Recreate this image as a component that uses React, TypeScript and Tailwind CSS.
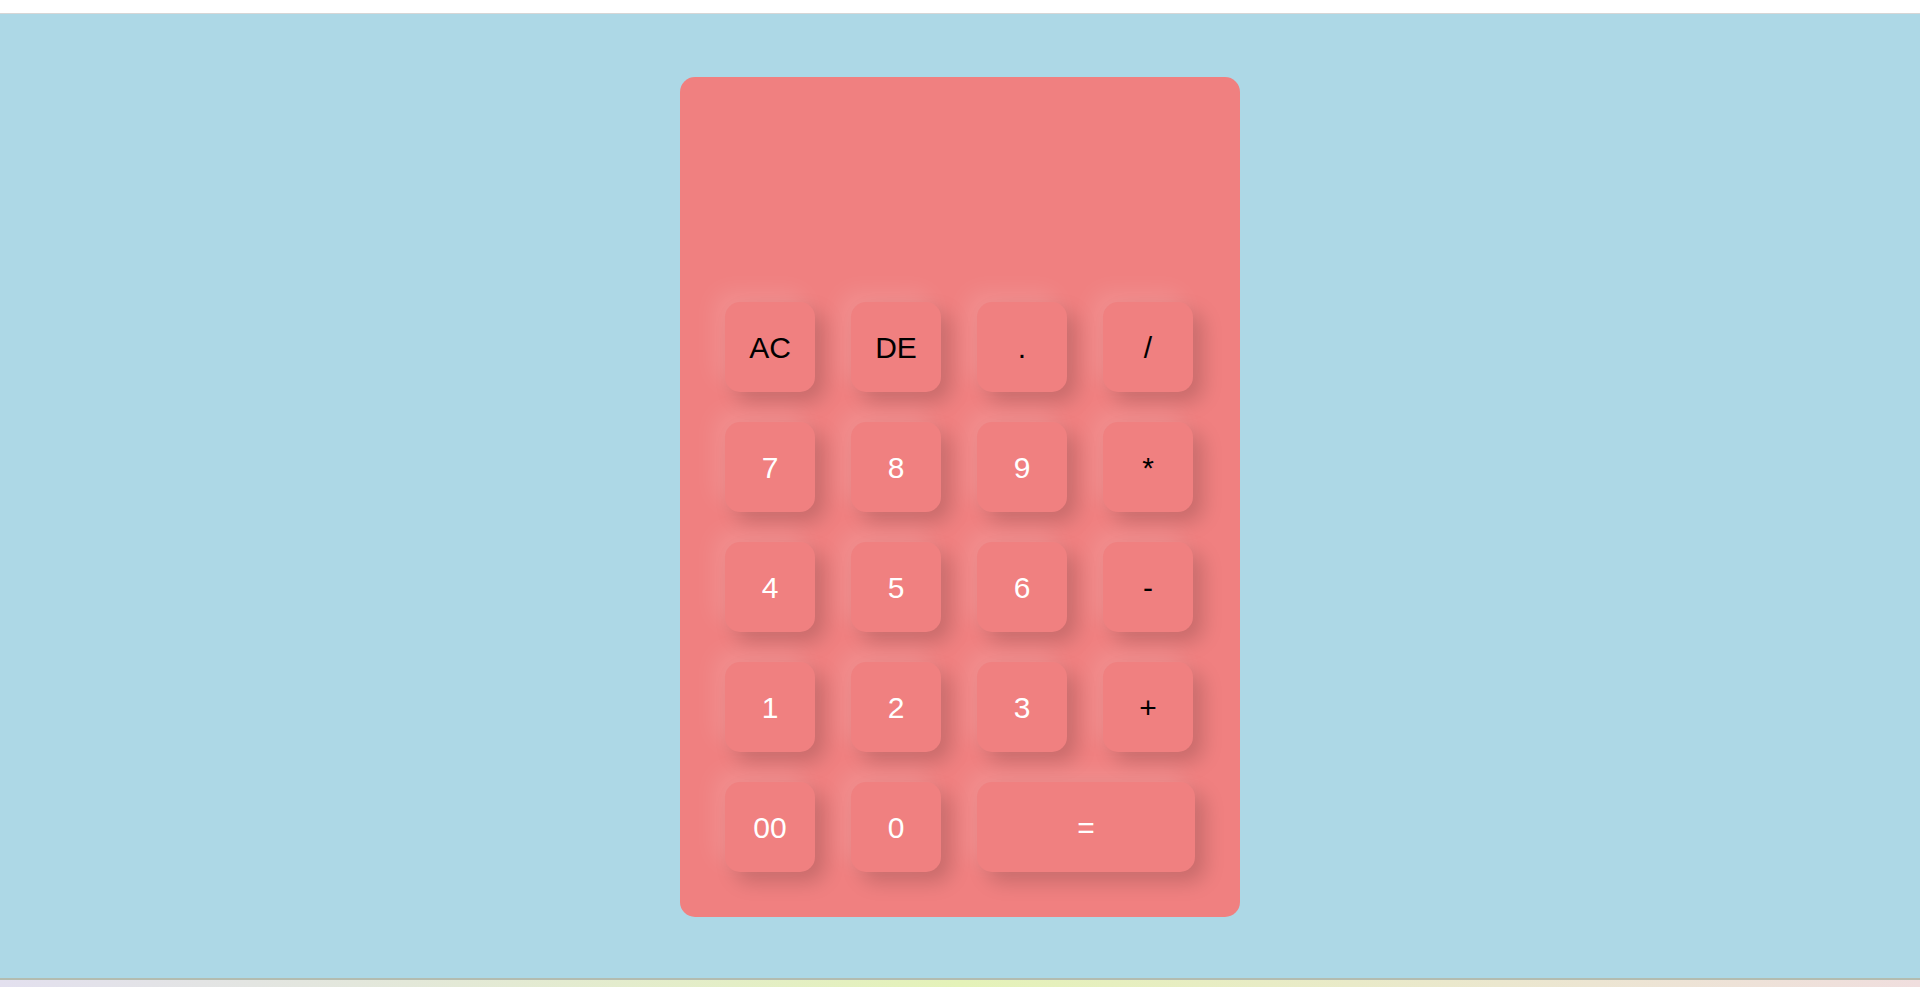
import React from "react";

type Key = { label: string; dark?: boolean; wide?: boolean };

const keys: Key[] = [
  { label: "AC", dark: true },
  { label: "DE", dark: true },
  { label: ".", dark: true },
  { label: "/", dark: true },
  { label: "7" },
  { label: "8" },
  { label: "9" },
  { label: "*", dark: true },
  { label: "4" },
  { label: "5" },
  { label: "6" },
  { label: "-", dark: true },
  { label: "1" },
  { label: "2" },
  { label: "3" },
  { label: "+", dark: true },
  { label: "00" },
  { label: "0" },
  { label: "=", wide: true },
];

export default function App() {
  return (
    <div className="w-[1920px] h-[987px] overflow-hidden bg-white flex flex-col" style={{ fontFamily: '"Liberation Sans", Arial, sans-serif' }}>
      <div className="h-[13px] bg-white" />
      <div className="h-[967px] bg-[#add8e6] border-t border-b-2 border-t-[#d6d6d6] border-b-[#b3bcb0] flex justify-center pt-[63px]">
        <div className="w-[560px] h-[840px] bg-[#f08080] rounded-[15px] px-[45px] pt-[45px]">
          <div className="h-[180px]" />
          <div className="grid grid-cols-[repeat(4,90px)] gap-x-[36px] gap-y-[30px]">
            {keys.map((k) => (
              <button
                key={k.label}
                className={`h-[90px] rounded-[15px] bg-[#f08080] flex items-center justify-center text-[30px] pt-px shadow-[-10px_-10px_22px_rgba(255,255,255,0.12),10px_10px_20px_rgba(0,0,0,0.17)] ${k.wide ? "col-span-2 w-[218px]" : "w-[90px]"} ${k.dark ? "text-black" : "text-white"}`}
              >
                {k.label}
              </button>
            ))}
          </div>
        </div>
      </div>
      <div className="flex-1 bg-gradient-to-r from-[#e3e0ef] via-[#e4f2b8] to-[#f0dede]" />
    </div>
  );
}
